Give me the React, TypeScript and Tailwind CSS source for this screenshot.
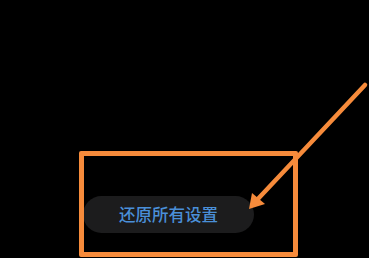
import React from 'react';

const App: React.FC = () => {
  return (
    <div className="relative h-[258px] w-[369px] overflow-hidden bg-black font-['Noto_Sans_CJK_SC',sans-serif]">
      {/* Reset button */}
      <div className="pl-[83px] pt-[196px]">
        <button className="flex h-[37px] w-[171px] items-center justify-center rounded-full bg-[#1c1c1d] text-[16.5px] font-medium leading-none text-[#4a8fd8]">
          还原所有设置
        </button>
      </div>

      {/* Annotation box */}
      <div className="absolute left-[79px] top-[151px] h-[106px] w-[219px] rounded-[2px] border-[5px] border-[#f68b3b]" />

      {/* Annotation arrow */}
      <svg className="absolute left-0 top-0" width="369" height="258" viewBox="0 0 369 258">
        <line x1="365" y1="85" x2="256" y2="201" stroke="#f68b3b" strokeWidth="4.5" strokeLinecap="round" />
        <polygon points="249,209 252,193 265,204" fill="#f68b3b" />
      </svg>
    </div>
  );
};

export default App;
